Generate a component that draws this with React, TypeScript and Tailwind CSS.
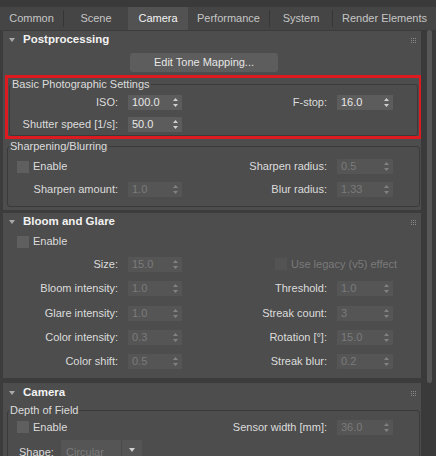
import type { ReactNode } from "react";

const Arrows = ({ dim }: { dim?: boolean }) => (
  <svg width="5" height="9" viewBox="0 0 5 9" className="mr-[4px] shrink-0">
    <path d="M2.5 0 L5 3 L0 3 Z M0 6 L5 6 L2.5 9 Z" fill={dim ? "#828282" : "#cfcfcf"} />
  </svg>
);

const Spin = ({ value, dim, wide }: { value: string; dim?: boolean; wide?: boolean }) => (
  <div
    className={`flex h-[15px] items-center ${wide ? "w-[56px]" : "w-[54px]"} ${
      dim ? "bg-[#555555] text-[#7b7b7b]" : "bg-[#5c5c5c] text-[#e8e8e8]"
    }`}
  >
    <span className="flex-1 pl-[4px] leading-none">{value}</span>
    <Arrows dim={dim} />
  </div>
);

const Field = ({
  label,
  value,
  dim,
  lw,
  wide,
}: {
  label: string;
  value: string;
  dim?: boolean;
  lw: string;
  wide?: boolean;
}) => (
  <div className="flex items-center">
    <span className={`${lw} pr-[10px] text-right`}>{label}</span>
    <Spin value={value} dim={dim} wide={wide} />
  </div>
);

const Check = ({ label, dim }: { label: string; dim?: boolean }) => (
  <div className="flex items-center gap-[4px]">
    <div className={`h-[12px] w-[12px] ${dim ? "bg-[#535353]" : "bg-[#5f5f5f]"}`} />
    <span className={dim ? "text-[#7a7a7a]" : ""}>{label}</span>
  </div>
);

const Grip = () => (
  <svg width="5" height="5" viewBox="0 0 5 5">
    {[0, 2, 4].map((y) =>
      [0, 2, 4].map((x) => <rect key={`${x}-${y}`} x={x} y={y} width="1" height="1" fill="#8a8a8a" />)
    )}
  </svg>
);

const Head = ({ title, h }: { title: string; h: string }) => (
  <div className={`flex items-center ${h} pl-[6px] pr-[5px]`}>
    <svg width="6" height="4" viewBox="0 0 6 4">
      <path d="M0 0 H6 L3 4 Z" fill="#a9a9a9" />
    </svg>
    <span className="ml-[8px] flex-1 text-[11.5px] font-bold text-[#f2f2f2]">{title}</span>
    <Grip />
  </div>
);

const Group = ({ title, className, children }: { title: string; className: string; children: ReactNode }) => (
  <fieldset className={`rounded-[3px] border border-[#3a3a3a] ${className}`}>
    <legend className="ml-[1px] px-[1px] leading-[13px]">{title}</legend>
    {children}
  </fieldset>
);

const tabs = [
  { name: "Common", w: "w-[63px]", sep: true },
  { name: "Scene", w: "w-[64px]" },
  { name: "Camera", w: "w-[60px]", active: true },
  { name: "Performance", w: "w-[81px]", sep: true },
  { name: "System", w: "w-[62px]", sep: true },
  { name: "Render Elements", w: "w-[103px]" },
];

export default function App() {
  return (
    <div className="flex h-[456px] w-[436px] flex-col overflow-hidden bg-[#3c3c3c] font-['Liberation_Sans',Arial,sans-serif] text-[11px] text-[#dcdcdc]">
      {/* tabs */}
      <div className="flex h-[30px] flex-col bg-[#3a3a3a]">
        <div className="h-[7px]" />
        <div className="flex h-[23px] items-stretch bg-[#454545] text-[#c6c6c6]">
          {tabs.map((t) => (
            <div key={t.name} className="flex items-center">
              <div
                className={`flex h-full items-center justify-center ${t.w} ${
                  t.active ? "bg-[#525252] text-[#f4f4f4]" : ""
                }`}
              >
                {t.name}
              </div>
              {t.sep && <div className="h-[17px] w-px bg-[#363636]" />}
            </div>
          ))}
        </div>
      </div>

      <div className="flex flex-1">
        <div className="w-[421px] pt-[1px]">
          {/* Postprocessing */}
          <div className="ml-[3px] w-[418px] bg-[#4d4d4d] pb-[3px]">
            <Head title="Postprocessing" h="h-[18px]" />
            <div className="ml-[127px] mt-[4px] flex h-[19px] w-[148px] items-center justify-center rounded-[3px] bg-[#5d5d5d] text-[#e6e6e6]">
              Edit Tone Mapping...
            </div>
            <div className="ml-[2px] mt-[3px] w-[417px] border-[3px] border-[#dc1a1f]">
              <Group title="Basic Photographic Settings" className="mx-[1px]">
                <div className="flex h-[22px] items-center">
                  <Field label="ISO:" value="100.0" lw="w-[118px]" />
                  <Field label="F-stop:" value="16.0" lw="w-[155px]" wide />
                </div>
                <div className="flex h-[22px] items-center">
                  <Field label="Shutter speed [1/s]:" value="50.0" lw="w-[118px]" />
                </div>
              </Group>
            </div>
            <Group title="Sharpening/Blurring" className="ml-[4px] mt-[1px] w-[413px]">
              <div className="pb-[5px] pt-[2px]">
                <div className="flex h-[23px] items-center">
                  <div className="w-[174px] pl-[9px]">
                    <Check label="Enable" />
                  </div>
                  <Field label="Sharpen radius:" value="0.5" lw="w-[155px]" dim wide />
                </div>
                <div className="flex h-[23px] items-center">
                  <Field label="Sharpen amount:" value="1.0" lw="w-[120px]" dim />
                  <Field label="Blur radius:" value="1.33" lw="w-[155px]" dim wide />
                </div>
              </div>
            </Group>
          </div>

          {/* Bloom and Glare */}
          <div className="ml-[3px] mt-[3px] w-[418px] bg-[#4d4d4d] pb-[5px]">
            <Head title="Bloom and Glare" h="h-[18px]" />
            <div className="flex h-[21px] items-center pl-[14px]">
              <Check label="Enable" />
            </div>
            <div className="flex h-[24px] items-center">
              <Field label="Size:" value="15.0" lw="w-[125px]" dim />
              <div className="ml-[93px]">
                <Check label="Use legacy (v5) effect" dim />
              </div>
            </div>
            <div className="flex h-[24px] items-center">
              <Field label="Bloom intensity:" value="1.0" lw="w-[125px]" dim />
              <Field label="Threshold:" value="1.0" lw="w-[155px]" dim wide />
            </div>
            <div className="mt-[1px] flex h-[24px] items-center">
              <Field label="Glare intensity:" value="1.0" lw="w-[125px]" dim />
              <Field label="Streak count:" value="3" lw="w-[155px]" dim wide />
            </div>
            <div className="flex h-[24px] items-center">
              <Field label="Color intensity:" value="0.3" lw="w-[125px]" dim />
              <Field label="Rotation [°]:" value="15.0" lw="w-[155px]" dim wide />
            </div>
            <div className="flex h-[24px] items-center">
              <Field label="Color shift:" value="0.5" lw="w-[125px]" dim />
              <Field label="Streak blur:" value="0.2" lw="w-[155px]" dim wide />
            </div>
          </div>

          {/* Camera */}
          <div className="ml-[3px] mt-[5px] w-[418px] bg-[#4d4d4d] pb-[10px]">
            <Head title="Camera" h="h-[20px]" />
            <Group title="Depth of Field" className="ml-[4px] mt-[1px] w-[413px]">
              <div className="flex h-[20px] items-center">
                <div className="w-[174px] pl-[9px]">
                  <Check label="Enable" />
                </div>
                <Field label="Sensor width [mm]:" value="36.0" lw="w-[155px]" dim wide />
              </div>
              <div className="mt-[3px] flex h-[22px] items-start pl-[11px]">
                <span className="w-[42px] pt-[4px]">Shape:</span>
                <div className="flex h-[20px] w-[81px] bg-[#555555]">
                  <span className="flex-1 pl-[5px] pt-[4px] text-[#7b7b7b]">Circular</span>
                  <div className="flex w-[21px] items-center justify-center border-l border-[#4a4a4a]">
                    <svg width="6" height="4" viewBox="0 0 6 4">
                      <path d="M0 0 H6 L3 4 Z" fill="#d0d0d0" />
                    </svg>
                  </div>
                </div>
              </div>
            </Group>
          </div>
        </div>

        {/* scrollbar */}
        <div className="flex-1 bg-[#3a3a3a] pl-[6px]">
          <div className="h-[353px] w-[5px] rounded-full bg-[#575757]" />
        </div>
      </div>
    </div>
  );
}
